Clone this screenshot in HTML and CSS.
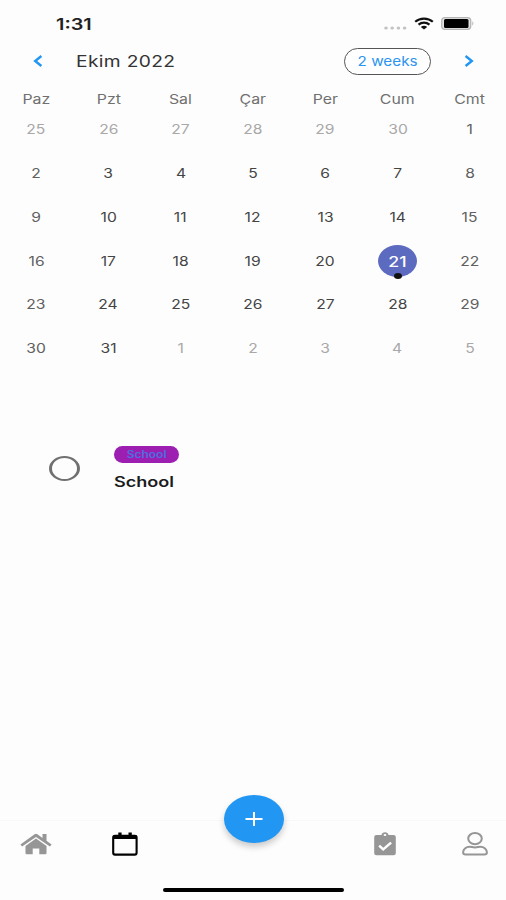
FILE: index.html
```html
<!DOCTYPE html>
<html lang="tr">
<head>
<meta charset="utf-8">
<title>Ekim 2022</title>
<link rel="stylesheet" href="styles.css">
</head>
<body>
<div class="app">
  <header class="status">
    <span class="time wide">1:31</span>
    <div class="signals">
      <svg width="24" height="6" viewBox="0 0 24 6" fill="#c2c2c2"><ellipse cx="3" cy="3" rx="1.800" ry="1.500"/><ellipse cx="9.2" cy="3" rx="1.800" ry="1.500"/><ellipse cx="15.4" cy="3" rx="1.800" ry="1.500"/><ellipse cx="21.6" cy="3" rx="1.800" ry="1.500"/></svg>
      <svg class="wifi" width="20" height="13" viewBox="0 0 20 13" fill="none" stroke="#111" stroke-width="2.2"><path d="M1.2 4.8C6 .5 14 .5 18.8 4.8M4.5 7.6c3.200-2.700 7.800-2.700 11 0"/><path d="M10 12.400l-3.200-2.500c1.800-1.500 4.600-1.500 6.400 0z" fill="#111" stroke="none"/></svg>
      <svg class="battery" width="34" height="13" viewBox="0 0 34 13"><rect x=".7" y=".7" width="29" height="11.600" rx="3" fill="#e4e4e4" stroke="#b5b5b5" stroke-width="1.300"/><rect x="3" y="2" width="24.500" height="9" rx="1.500" fill="#000"/><path d="M31.300 4.300q2.200 2.200 0 4.400z" fill="#b5b5b5"/></svg>
    </div>
  </header>
  <div class="toolbar">
    <svg class="prev" width="10" height="12" viewBox="0 0 10 12"><path d="M8.400 1L2.200 6l6.200 5"/></svg>
    <span class="month wide">Ekim 2022</span>
    <button class="format"><span class="wide">2 weeks</span></button>
    <svg class="next" width="10" height="12" viewBox="0 0 10 12"><path d="M1.600 1l6.200 5-6.200 5"/></svg>
  </div>
  <div class="week names"><span>Paz</span><span>Pzt</span><span>Sal</span><span>Çar</span><span>Per</span><span>Cum</span><span>Cmt</span></div>
  <div class="days">
    <div class="week"><span class="out">25</span><span class="out">26</span><span class="out">27</span><span class="out">28</span><span class="out">29</span><span class="out">30</span><span class="weekend">1</span></div>
    <div class="week"><span class="weekend">2</span><span>3</span><span>4</span><span>5</span><span>6</span><span>7</span><span class="weekend">8</span></div>
    <div class="week"><span class="weekend">9</span><span>10</span><span>11</span><span>12</span><span>13</span><span>14</span><span class="weekend">15</span></div>
    <div class="week"><span class="weekend">16</span><span>17</span><span>18</span><span>19</span><span>20</span><div class="selected"><span>21</span><i class="marker"></i></div><span class="weekend">22</span></div>
    <div class="week"><span class="weekend">23</span><span>24</span><span>25</span><span>26</span><span>27</span><span>28</span><span class="weekend">29</span></div>
    <div class="week"><span class="weekend">30</span><span>31</span><span class="out">1</span><span class="out">2</span><span class="out">3</span><span class="out">4</span><span class="out">5</span></div>
  </div>
  <main class="tasks">
    <div class="task">
      <span class="check"></span>
      <div class="info">
        <div class="tag"><span>School</span></div>
        <div class="title wide">School</div>
      </div>
    </div>
  </main>
  <nav class="tabs">
    <svg class="home" width="32" height="22" viewBox="0 0 32 22" fill="#969696"><path d="M16 5.600L5.500 13v7.200q0 1 1.200 1h6v-5.700h6.600v5.700h6q1.200 0 1.200-1V13z"/><path d="M.4 11.400L14.600 1.200q1.400-.9 2.800 0l5.100 3.800V1h4v6.800l5.100 3.600-1.700 2L16 3.900 2.100 13.400z"/></svg>
    <svg class="calendar" width="26" height="24" viewBox="0 0 26 24"><rect x="1.200" y="3.900" width="23.400" height="18.700" rx="1.800" fill="none" stroke="#000" stroke-width="2.100"/><path d="M1 3.500h24v3.400H1zM6.300.5h3.300V5H6.300zM16.500.5h3.300V5h-3.300z"/></svg>
    <svg class="clipboard" width="22" height="24" viewBox="0 0 22 24"><path d="M2.500 3h5q.5-2.700 3.500-2.700T14.500 3h5q2.300 0 2.300 2v16.300q0 2-2.300 2h-17q-2.300 0-2.300-2V5q0-2 2.300-2z" fill="#969696"/><ellipse cx="11" cy="3" rx="1.400" ry="1.100" fill="#fff"/><path d="M5.200 13.600l4 3.800 7.900-6.800" fill="none" stroke="#fff" stroke-width="2.500"/></svg>
    <svg class="person" width="26" height="24" viewBox="0 0 26 24" fill="none" stroke="#969696" stroke-width="2"><ellipse cx="13" cy="6.600" rx="6.800" ry="5.600"/><path d="M7.800 14.700c2 0 2.500.8 5.200.8s3.200-.8 5.200-.8c4 0 6.700 2.600 6.700 5.800 0 1.500-1 2-2.500 2H3.600c-1.500 0-2.500-.5-2.500-2 0-3.200 2.700-5.800 6.700-5.800z"/></svg>
    <button class="add" aria-label="Ekle"><svg width="18" height="14" viewBox="0 0 18 14"><path d="M9 0v14M.5 7h17" stroke="#fff" stroke-width="2"/></svg></button>
  </nav>
  <div class="home-bar"></div>
</div>
</body>
</html>
```
FILE: styles.css
```css
* { box-sizing: border-box; }
body { margin: 0; background: #fdfdfd; font-family: Inter, "Liberation Sans", sans-serif; color: #444; }
.app { width: 506px; height: 900px; display: flex; flex-direction: column; overflow: hidden; }
svg { flex: none; display: block; }
button { padding: 0; font: inherit; }
.wide { display: inline-block; transform: scaleX(1.24); transform-origin: left; white-space: nowrap; }
.status { height: 40px; padding: 14px 31px 0 56px; display: flex; justify-content: space-between; align-items: flex-start; }
.time { font-size: 16px; line-height: 20px; font-weight: 600; color: #222; }
.signals { display: flex; align-items: flex-start; padding-top: 3px; }
.signals > :first-child { margin-top: 8px; }
.wifi { margin-left: 7px; }
.battery { margin-left: 7px; }
.toolbar { height: 42px; padding: 0 32px 0 33px; display: flex; align-items: center; }
.prev, .next { fill: none; stroke: #2196f3; stroke-width: 2.4; }
.month { font-size: 16px; margin-left: 33px; letter-spacing: .3px; color: #333; transform: scaleX(1.2); }
.format { width: 87px; height: 27px; margin-left: auto; margin-right: 33px; border: 1px solid #555; border-radius: 14px; background: #fff; color: #2b94ef; font-size: 13.500px; display: flex; align-items: center; justify-content: center; }
.format .wide { transform-origin: center; transform: scaleX(1.13); }
.week { display: grid; grid-template-columns: repeat(7, 1fr); align-items: center; justify-items: center; font-size: 12.800px; }
.week span { transform: scaleX(1.22); }
.week .weekend { color: #606060; }
.week .out { color: #a8a8a8; }
.names { height: 25px; padding-top: 9px; color: #707070; font-size: 13px; }
.days { display: grid; grid-template-rows: repeat(6, 43.750px); padding-top: 1px; }
.selected { position: relative; width: 39px; height: 32px; border-radius: 50%; background: #5c6bc0; color: #fff; display: flex; align-items: center; justify-content: center; font-size: 14.500px; font-weight: 500; }
.marker { position: absolute; left: 15.500px; bottom: -2px; width: 8px; height: 6px; border-radius: 50%; background: #111; }
.tasks { flex: 1; padding: 75px 49px 0; }
.task { display: flex; align-items: center; }
.check { width: 31px; height: 25px; border: 2.500px solid #707070; border-width: 2px 3px; border-radius: 50%; }
.info { margin-left: 34px; }
.tag { width: 65px; height: 17px; border-radius: 9px; background: #9c1fb2; color: #4b6ee0; font-size: 10px; font-weight: 600; display: flex; align-items: center; justify-content: center; }
.tag span { transform: scaleX(1.2); }
.title { font-size: 14px; line-height: 18px; margin-top: 10px; font-weight: 600; color: #1c1c1c; transform: scaleX(1.29); }
.tabs { position: relative; height: 68px; border-top: 1px solid #f7f8fa; padding: 11px 18px 0 20px; display: flex; align-items: flex-start; }
.home { margin-top: 1px; }
.calendar { margin-left: 60px; }
.clipboard { margin-left: auto; }
.person { margin-left: 66px; }
.add { position: absolute; left: 224px; top: -26px; width: 60px; height: 48px; border: 0; border-radius: 50%; background: #2196f3; box-shadow: 0 4px 6px rgba(0,0,0,.2); display: flex; align-items: center; justify-content: center; }
.home-bar { width: 181px; height: 4px; margin: 0 auto 8px; border-radius: 3px; background: #000; }
```
